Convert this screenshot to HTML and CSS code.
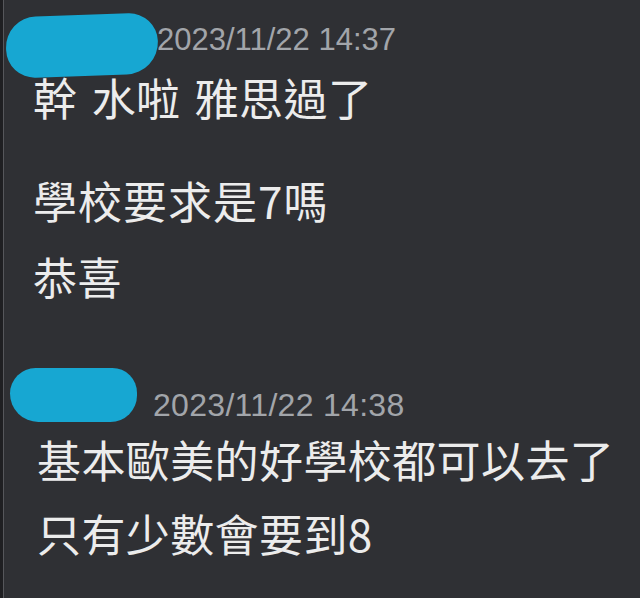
FILE: index.html
```html
<!DOCTYPE html>
<html lang="zh-Hant">
<head>
    <meta charset="UTF-8">
    <meta name="viewport" content="width=device-width, initial-scale=1.0">
    <title>聊天</title>
    <link rel="stylesheet" href="styles.css">
</head>
<body>
    <div class="screen">

        <div class="group first">
            <div class="header">
                <div class="blob blob1"></div>
                <span class="time">2023/11/22 14:37</span>
            </div>
            <p class="msg line1">幹 水啦 雅思過了</p>
            <p class="msg line2">學校要求是7嗎</p>
            <p class="msg line3">恭喜</p>
        </div>

        <div class="group second">
            <div class="header">
                <div class="blob blob2"></div>
                <span class="time">2023/11/22 14:38</span>
            </div>
            <p class="msg line4">基本歐美的好學校都可以去了</p>
            <p class="msg line5">只有少數會要到8</p>
        </div>

    </div>
</body>
</html>
```

FILE: styles.css
```css
body {
    margin: 0;
    background: #2f3034;
    font-family: "Noto Sans CJK TC", "Liberation Sans", sans-serif;
}
.screen {
    width: 637px;
    height: 598px;
    overflow: hidden;
    border-left: 3px solid #1f1f22;
    box-shadow: inset 1px 0 #56575b;
    background: #2f3034;
}

.group {
    display: flex;
    flex-direction: column;
}
.first {
    padding-top: 15px;
}
.second {
    padding-top: 70px;
}

.header {
    display: flex;
    align-items: flex-start;
}
.first .header {
    height: 60px;
}
.second .header {
    height: 69px;
}

.blob {
    background: #17a7d2;
    flex: none;
}
.blob1 {
    width: 152px;
    height: 61px;
    margin-left: 3px;
    border-radius: 32px 30px 34px 30px;
    transform: rotate(-2deg);
}
.blob2 {
    width: 127px;
    height: 54px;
    margin-left: 7px;
    border-radius: 27px 26px 28px 30px;
}

.time {
    font-family: "Liberation Sans", sans-serif;
    font-size: 31px;
    line-height: 31px;
    color: #a2a5aa;
    white-space: nowrap;
}
.first .time {
    margin-top: 9px;
    margin-left: -1px;
}
.second .time {
    font-size: 32px;
    letter-spacing: 0.3px;
    margin-top: 22px;
    margin-left: 16px;
}

.msg {
    margin: 0;
    font-size: 44px;
    line-height: 44px;
    letter-spacing: 0.4px;
    color: #ececec;
    white-space: nowrap;
}
.first .msg {
    padding-left: 30px;
}
.second .msg {
    padding-left: 34px;
}
.line1 {
    word-spacing: 4px;
}
.line2 {
    margin-top: 59px;
    letter-spacing: 1px;
}
.line3 {
    margin-top: 32px;
}
.line5 {
    margin-top: 30px;
}
```
